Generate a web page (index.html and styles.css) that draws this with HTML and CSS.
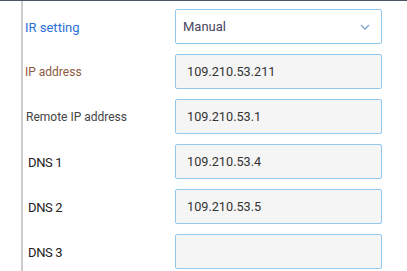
FILE: index.html
```html
<!DOCTYPE html>
<html lang="en">
<head>
    <meta charset="UTF-8">
    <meta name="viewport" content="width=device-width, initial-scale=1.0">
    <title>Network settings</title>
    <link rel="stylesheet" href="styles.css">
</head>
<body>
    <div class="panel">
        <form class="settings">
            <label class="lbl lbl-ir" for="irMode">IR setting</label>
            <div class="field select">
                <span>Manual</span>
                <svg class="chevron" width="10" height="6" viewBox="0 0 10 6"><path d="M1 1 L5 5 L9 1" fill="none" stroke="#7fa6cf" stroke-width="1.3"/></svg>
            </div>

            <label class="lbl lbl-ip">IP address</label>
            <div class="field">109.210.53.211</div>

            <label class="lbl lbl-remote">Remote IP address</label>
            <div class="field">109.210.53.1</div>

            <label class="lbl lbl-dns">DNS 1</label>
            <div class="field">109.210.53.4</div>

            <label class="lbl lbl-dns">DNS 2</label>
            <div class="field">109.210.53.5</div>

            <label class="lbl lbl-dns">DNS 3</label>
            <div class="field"></div>
        </form>
    </div>
</body>
</html>
```

FILE: styles.css
```css
body {
    margin: 0;
    background: #fff;
    font-family: Roboto, "Liberation Sans", sans-serif;
}

.panel {
    border-top: 1px solid #4b5563;
    height: 270px;
}

.settings {
    margin-left: 21px;
    border-left: 2px solid #cdcdcd;
    height: 100%;
    box-sizing: border-box;
    padding-top: 8px;
    display: grid;
    grid-template-columns: 152px 207px;
    grid-auto-rows: 35px;
    row-gap: 10px;
}

.lbl {
    display: flex;
    align-items: center;
    padding-top: 1px;
}

.lbl-ir {
    padding-left: 2px;
    color: #2b6fd6;
    font-size: 13px;
}

.lbl-ip {
    padding-left: 2px;
    color: #8b5a42;
    font-size: 12px;
}

.lbl-remote {
    padding-left: 3px;
    color: #444;
    font-size: 12px;
}

.lbl-dns {
    padding-left: 5px;
    color: #222;
    font-size: 13px;
    letter-spacing: -0.4px;
}

.field {
    box-sizing: border-box;
    border: 1px solid #93c8ee;
    border-radius: 2px;
    background: #f5f5f5;
    display: flex;
    align-items: center;
    padding-left: 11px;
    font-size: 12.7px;
    color: #333;
}

.select {
    background: #fff;
    padding-left: 7px;
    padding-right: 11px;
    justify-content: space-between;
    color: #4a4560;
    font-size: 13px;
}
```
